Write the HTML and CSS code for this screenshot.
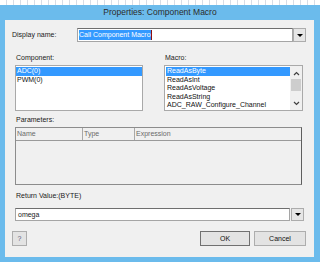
FILE: index.html
```html
<!DOCTYPE html>
<html lang="en">
<head>
  <meta charset="UTF-8">
  <title>Properties: Component Macro</title>
  <link rel="stylesheet" href="styles.css">
</head>
<body>

  <div class="top-strip"></div>

  <div class="frame">
    <div class="title-bar">Properties: Component Macro</div>

    <div class="dialog">

      <div class="name-row">
        <div class="name-label">Display name:</div>
        <div class="combo name-combo">
          <div class="field"><span class="selected-text">Call Component Macro</span></div>
          <div class="drop-btn"><span class="arrow"></span></div>
        </div>
      </div>

      <div class="lists">
        <div class="group">
          <div class="label">Component:</div>
          <div class="listbox comp-list">
            <div class="items">
              <div class="item selected">ADC(0)</div>
              <div class="item">PWM(0)</div>
            </div>
          </div>
        </div>

        <div class="group macro-group">
          <div class="label">Macro:</div>
          <div class="listbox macro-list">
            <div class="items">
              <div class="item selected">ReadAsByte</div>
              <div class="item">ReadAsInt</div>
              <div class="item">ReadAsVoltage</div>
              <div class="item">ReadAsString</div>
              <div class="item">ADC_RAW_Configure_Channel</div>
            </div>
            <div class="scrollbar">
              <svg class="chev" width="7" height="5" viewBox="0 0 7 5"><path d="M1 4 L3.5 1.5 L6 4" fill="none" stroke="#404040" stroke-width="1.2"/></svg>
              <div class="thumb"></div>
              <svg class="chev down" width="7" height="5" viewBox="0 0 7 5"><path d="M1 1 L3.5 3.5 L6 1" fill="none" stroke="#404040" stroke-width="1.2"/></svg>
            </div>
          </div>
        </div>
      </div>

      <div class="label params-label">Parameters:</div>
      <div class="param-table">
        <div class="param-head">
          <div class="col col-name">Name</div>
          <div class="col col-type">Type</div>
          <div class="col col-expr">Expression</div>
        </div>
      </div>

      <div class="label return-label">Return Value:(BYTE)</div>
      <div class="combo return-combo">
        <div class="field return-field">omega</div>
        <div class="drop-btn"><span class="arrow"></span></div>
      </div>

      <div class="buttons">
        <div class="btn help-btn">?</div>
        <div class="spacer"></div>
        <div class="btn ok-btn">OK</div>
        <div class="btn cancel-btn">Cancel</div>
      </div>

    </div>
  </div>

</body>
</html>
```

FILE: styles.css
```css
body {
  margin: 0;
  width: 320px;
  height: 262px;
  overflow: hidden;
  background-color: #ffffff;
  font-family: "Liberation Sans", Arial, sans-serif;
  font-size: 7px;
  color: #1a1a1a;
}

.top-strip {
  height: 5px;
  background: repeating-linear-gradient(90deg, #ffffff 0, #ffffff 6px, #d8dde6 6px, #d8dde6 7px);
}

.frame {
  background-color: #6bbbec;
  padding: 0 6px 5px 5px;
}

.title-bar {
  height: 15px;
  line-height: 15px;
  text-align: center;
  font-size: 8.5px;
  color: #2b2b2b;
  margin-right: -6px;
  margin-left: -5px;
}

.dialog {
  height: 237px;
  box-sizing: border-box;
  background-color: #f0f0f0;
  padding: 8px 8px 0 7px;
}

/* display name row */
.name-row {
  display: flex;
  align-items: center;
  height: 14px;
}

.name-label {
  width: 65px;
  line-height: 10px;
}

.combo {
  display: flex;
}

.field {
  box-sizing: border-box;
  height: 14px;
  background-color: #ffffff;
  border: 1px solid #a5a5a5;
  border-top-color: #6e6e6e;
  padding: 1px;
}

.name-combo .field {
  width: 216px;
}

.selected-text {
  display: inline-block;
  height: 10px;
  line-height: 10px;
  background-color: #3399ff;
  color: #ffffff;
  border-right: 1px solid #8b1010;
}

.drop-btn {
  box-sizing: border-box;
  width: 13px;
  height: 14px;
  background-color: #e6e6e6;
  border: 1px solid #acacac;
  display: flex;
  align-items: center;
  justify-content: center;
}

.arrow {
  width: 0;
  height: 0;
  border-left: 3px solid transparent;
  border-right: 3px solid transparent;
  border-top: 3px solid #000000;
}

/* component / macro lists */
.lists {
  display: flex;
  margin-top: 11px;
  padding-left: 3px;
}

.macro-group {
  margin-left: 21px;
}

.label {
  height: 10px;
  line-height: 10px;
  padding-left: 1px;
  margin-bottom: 2px;
}

.listbox {
  box-sizing: border-box;
  height: 46px;
  background-color: #ffffff;
  border: 1px solid #a9a9a9;
  padding: 1px 0 0 0;
  display: flex;
}

.comp-list {
  width: 128px;
}

.macro-list {
  width: 139px;
  padding-left: 1px;
}

.items {
  flex: 1;
}

.item {
  height: 8.5px;
  line-height: 8.5px;
  padding-left: 1px;
  white-space: nowrap;
  color: #111111;
}

.item.selected {
  background-color: #3399ff;
  color: #ffffff;
}

.scrollbar {
  width: 12px;
  margin-top: -1px;
  background-color: #f0f0f0;
  display: flex;
  flex-direction: column;
  align-items: center;
}

.chev {
  margin-top: 5px;
}

.chev.down {
  margin-top: 10px;
}

.thumb {
  width: 10px;
  height: 12px;
  margin-top: 3px;
  background-color: #cdcdcd;
}

/* parameters */
.params-label {
  margin-top: 4px;
  margin-left: 3px;
}

.param-table {
  box-sizing: border-box;
  width: 287px;
  height: 58px;
  margin-left: 3px;
  border: 1px solid #8c8c8c;
  border-right-color: #5e5e5e;
  background-color: #f0f0f0;
}

.param-head {
  display: flex;
  height: 12px;
  border-bottom: 1px solid #9a9a9a;
  color: #6a6a6a;
}

.col {
  line-height: 12px;
  padding-left: 1px;
  border-right: 1px solid #a8a8a8;
}

.col-name {
  width: 65px;
}

.col-type {
  width: 50px;
}

.col-expr {
  flex: 1;
  border-right: none;
}

/* return value */
.return-label {
  margin-top: 6px;
  margin-left: 3px;
  margin-bottom: 7px;
}

.return-combo {
  margin-left: 3px;
}

.return-field {
  width: 275px;
  height: 13px;
  line-height: 10px;
  padding-left: 2px;
}

.return-combo .drop-btn {
  height: 13px;
  margin-left: 1px;
}

/* buttons */
.buttons {
  display: flex;
  margin-top: 10px;
  gap: 4px;
}

.spacer {
  flex: 1;
}

.btn {
  box-sizing: border-box;
  height: 15px;
  line-height: 13px;
  text-align: center;
  background-color: #e3e3e3;
  border: 1px solid #adadad;
  color: #111111;
}

.help-btn {
  width: 15px;
  color: #5a5a7a;
}

.ok-btn {
  width: 50px;
  border-color: #707070;
}

.cancel-btn {
  width: 52px;
}
```
